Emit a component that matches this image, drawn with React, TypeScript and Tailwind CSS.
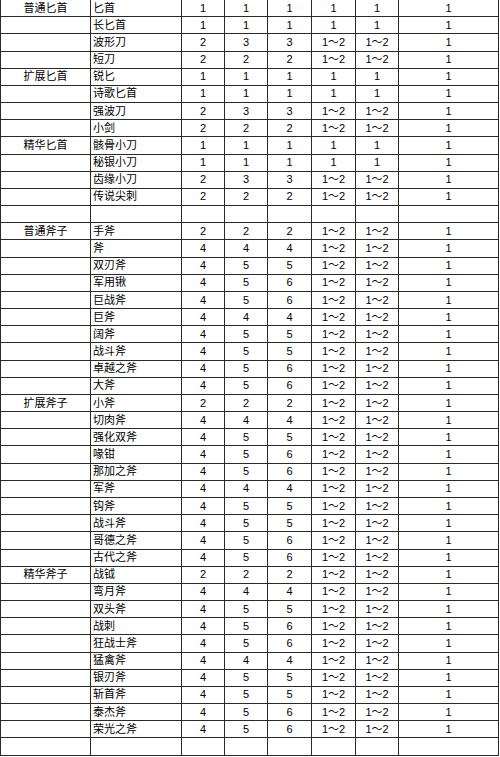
const groups: { name: string; rows: [string, string, string, string, string, string, string][] }[] = [
  {
    name: '普通匕首',
    rows: [
      ['匕首', '1', '1', '1', '1', '1', '1'],
      ['长匕首', '1', '1', '1', '1', '1', '1'],
      ['波形刀', '2', '3', '3', '1～2', '1～2', '1'],
      ['短刀', '2', '2', '2', '1～2', '1～2', '1'],
    ],
  },
  {
    name: '扩展匕首',
    rows: [
      ['锐匕', '1', '1', '1', '1', '1', '1'],
      ['诗歌匕首', '1', '1', '1', '1', '1', '1'],
      ['强波刀', '2', '3', '3', '1～2', '1～2', '1'],
      ['小剑', '2', '2', '2', '1～2', '1～2', '1'],
    ],
  },
  {
    name: '精华匕首',
    rows: [
      ['骸骨小刀', '1', '1', '1', '1', '1', '1'],
      ['秘银小刀', '1', '1', '1', '1', '1', '1'],
      ['齿缘小刀', '2', '3', '3', '1～2', '1～2', '1'],
      ['传说尖刺', '2', '2', '2', '1～2', '1～2', '1'],
    ],
  },
  { name: '', rows: [['', '', '', '', '', '', '']] },
  {
    name: '普通斧子',
    rows: [
      ['手斧', '2', '2', '2', '1～2', '1～2', '1'],
      ['斧', '4', '4', '4', '1～2', '1～2', '1'],
      ['双刃斧', '4', '5', '5', '1～2', '1～2', '1'],
      ['军用锹', '4', '5', '6', '1～2', '1～2', '1'],
      ['巨战斧', '4', '5', '6', '1～2', '1～2', '1'],
      ['巨斧', '4', '4', '4', '1～2', '1～2', '1'],
      ['阔斧', '4', '5', '5', '1～2', '1～2', '1'],
      ['战斗斧', '4', '5', '5', '1～2', '1～2', '1'],
      ['卓越之斧', '4', '5', '6', '1～2', '1～2', '1'],
      ['大斧', '4', '5', '6', '1～2', '1～2', '1'],
    ],
  },
  {
    name: '扩展斧子',
    rows: [
      ['小斧', '2', '2', '2', '1～2', '1～2', '1'],
      ['切肉斧', '4', '4', '4', '1～2', '1～2', '1'],
      ['强化双斧', '4', '5', '5', '1～2', '1～2', '1'],
      ['喙钳', '4', '5', '6', '1～2', '1～2', '1'],
      ['那加之斧', '4', '5', '6', '1～2', '1～2', '1'],
      ['军斧', '4', '4', '4', '1～2', '1～2', '1'],
      ['钩斧', '4', '5', '5', '1～2', '1～2', '1'],
      ['战斗斧', '4', '5', '5', '1～2', '1～2', '1'],
      ['哥德之斧', '4', '5', '6', '1～2', '1～2', '1'],
      ['古代之斧', '4', '5', '6', '1～2', '1～2', '1'],
    ],
  },
  {
    name: '精华斧子',
    rows: [
      ['战钺', '2', '2', '2', '1～2', '1～2', '1'],
      ['弯月斧', '4', '4', '4', '1～2', '1～2', '1'],
      ['双头斧', '4', '5', '5', '1～2', '1～2', '1'],
      ['战刺', '4', '5', '6', '1～2', '1～2', '1'],
      ['狂战士斧', '4', '5', '6', '1～2', '1～2', '1'],
      ['猛禽斧', '4', '4', '4', '1～2', '1～2', '1'],
      ['银刃斧', '4', '5', '5', '1～2', '1～2', '1'],
      ['斩首斧', '4', '5', '5', '1～2', '1～2', '1'],
      ['泰杰斧', '4', '5', '6', '1～2', '1～2', '1'],
      ['荣光之斧', '4', '5', '6', '1～2', '1～2', '1'],
    ],
  },
  { name: '', rows: [['', '', '', '', '', '', '']] },
];

const cell = 'h-[17.18px] border-b border-r border-[#2a2a2a] flex items-center';

export default function App() {
  return (
    <div
      className="w-[500px] h-[757px] bg-white text-[11px] leading-none text-black overflow-hidden"
      style={{ fontFamily: '"Liberation Sans", "Noto Sans CJK SC", sans-serif' }}
    >
      <div className="grid grid-cols-[91px_91px_43px_43px_44px_44px_43px_100px]">
        {groups.map((g, gi) =>
          g.rows.map((r, ri) => (
            <div key={`${gi}-${ri}`} className="contents">
              <div className={`${cell} border-l justify-center`}>{ri === 0 ? g.name : ''}</div>
              <div className={`${cell} pl-[2px]`}>{r[0]}</div>
              {r.slice(1).map((v, vi) => (
                <div key={vi} className={`${cell} justify-center`}>
                  {v}
                </div>
              ))}
            </div>
          ))
        )}
      </div>
    </div>
  );
}
